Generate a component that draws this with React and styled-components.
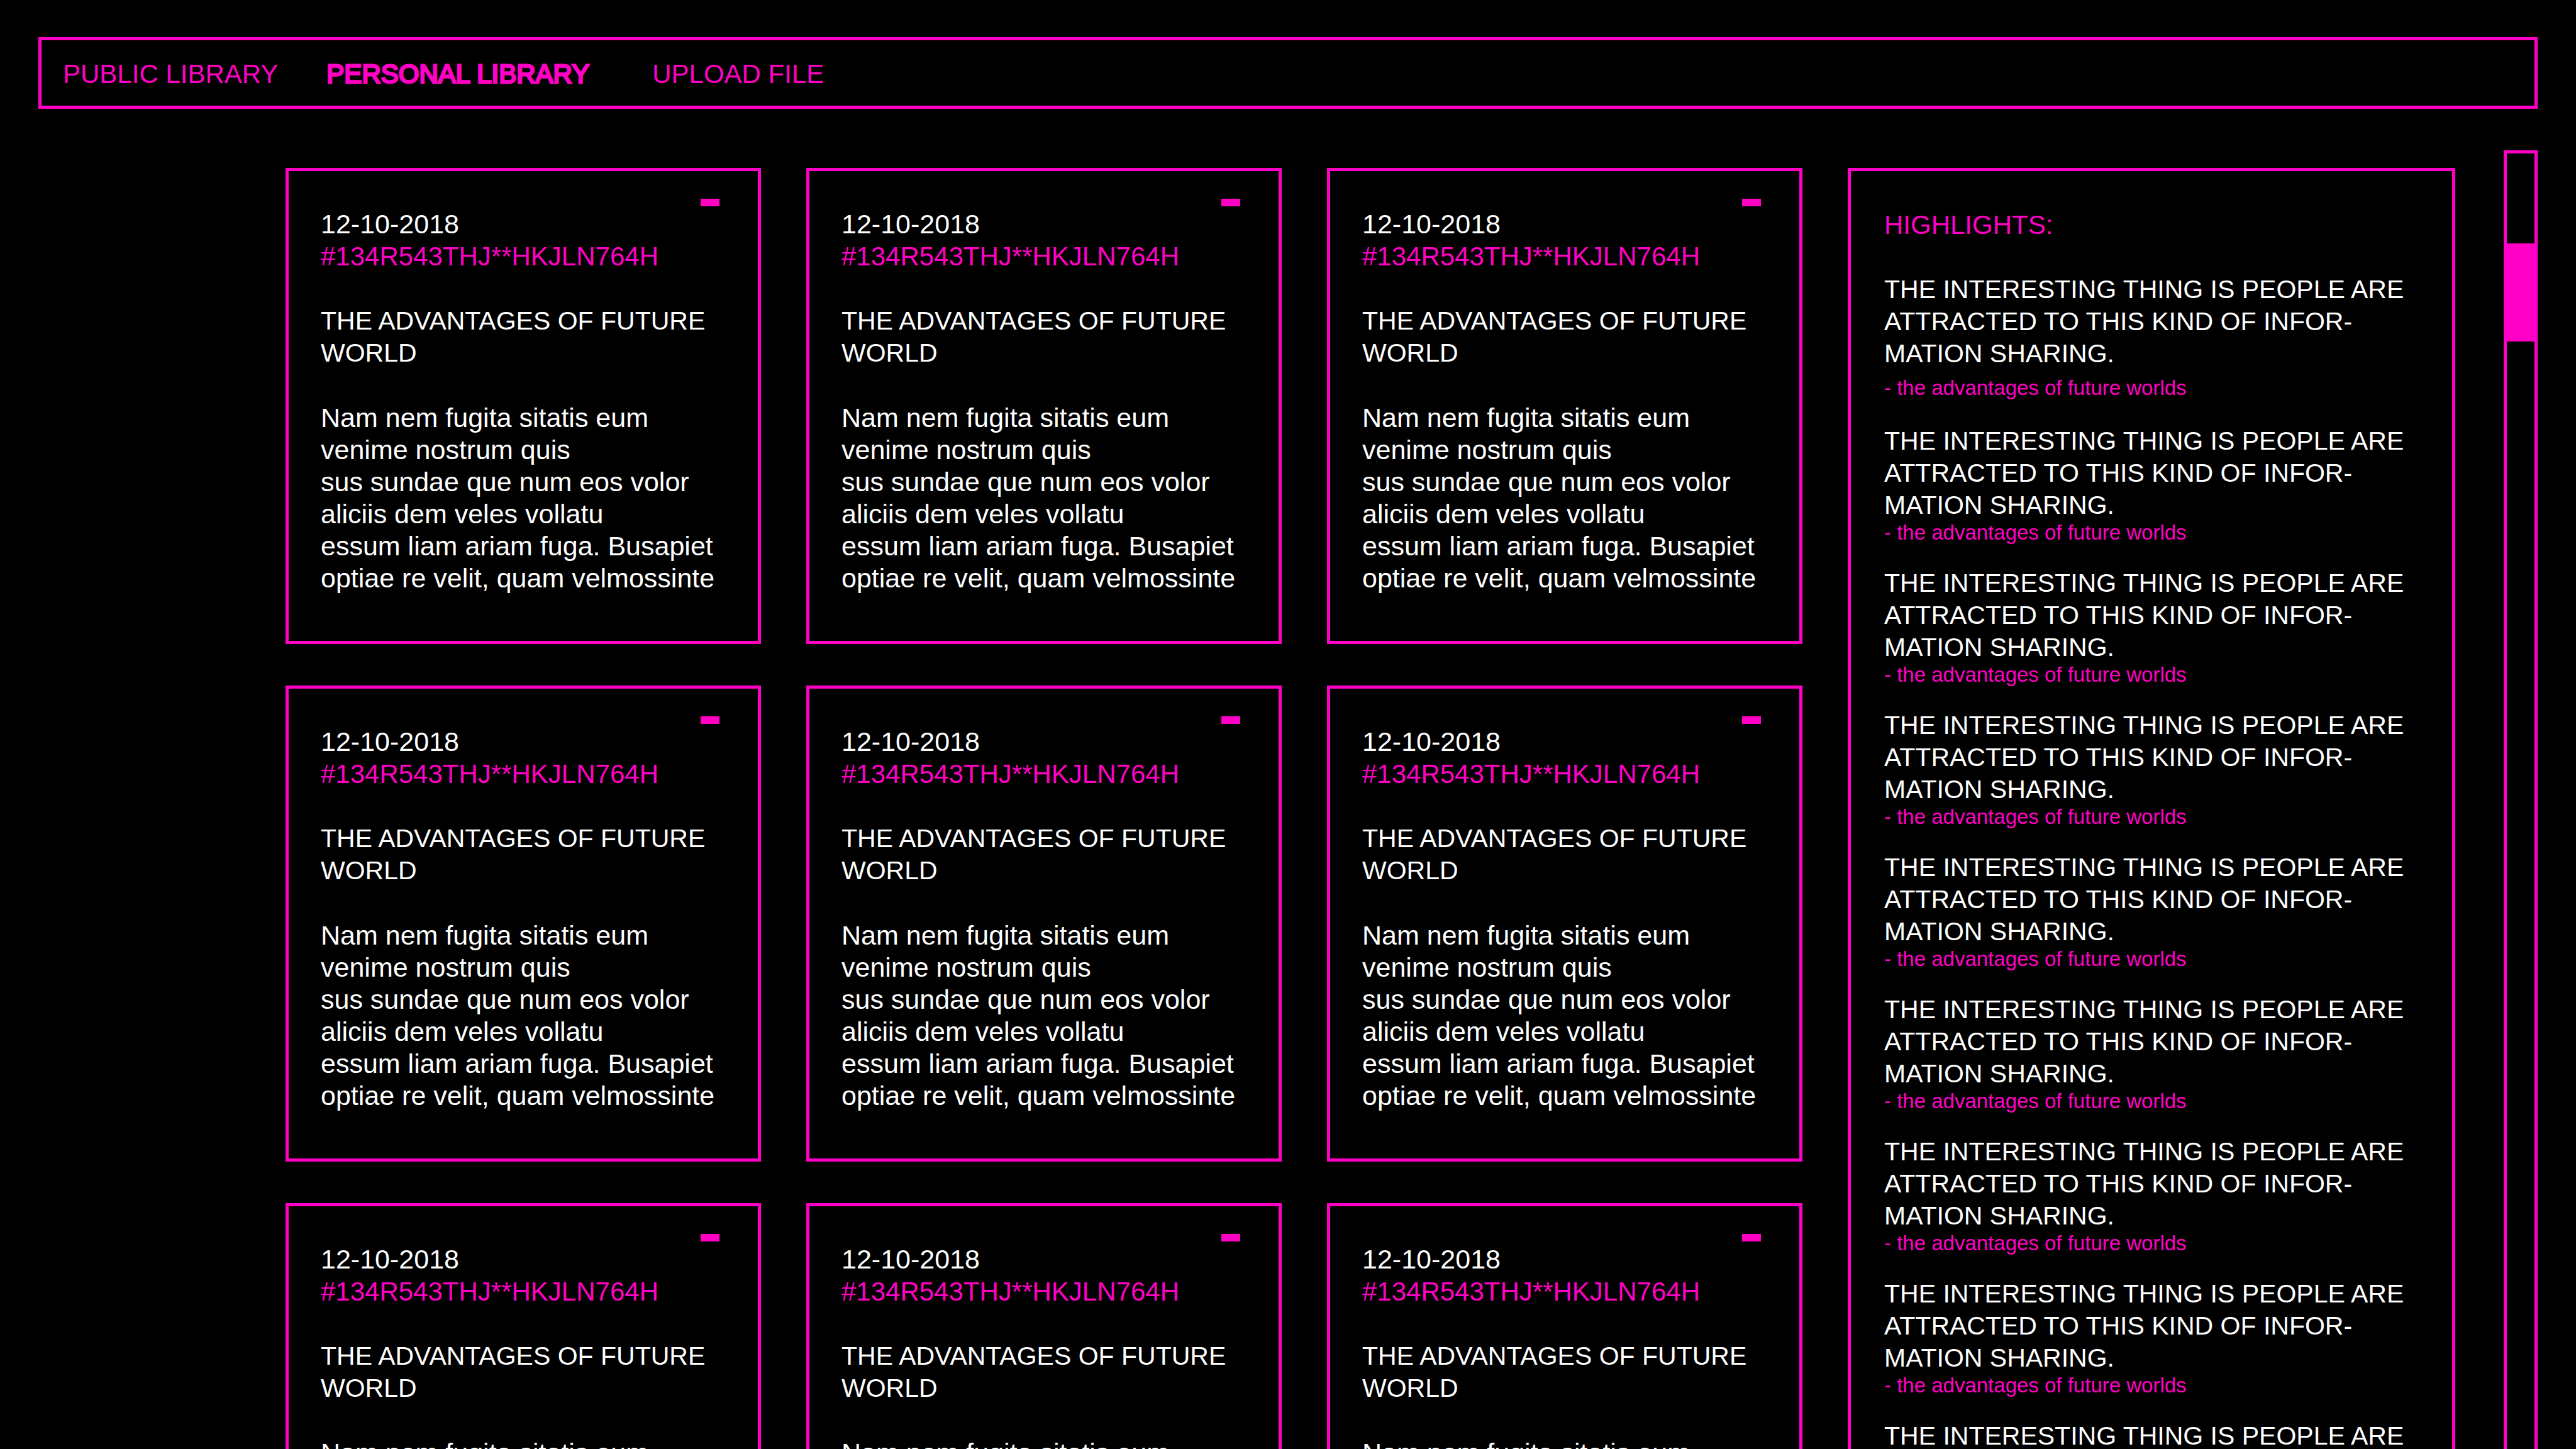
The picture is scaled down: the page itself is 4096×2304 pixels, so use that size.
import React from "react";
import styled, { createGlobalStyle } from "styled-components";

const PINK = "#ff00c4";

const GlobalStyle = createGlobalStyle`
  *, *::before, *::after { box-sizing: border-box; }
  body {
    margin: 0;
    background: #000;
    color: #fff;
    font-family: "Liberation Sans", Arial, sans-serif;
    font-size: 42px;
    line-height: 51px;
  }
  h2, p, ul { margin: 0; padding: 0; font: inherit; }
`;

const Page = styled.div`
  display: flex;
  flex-direction: column;
  height: 100vh;
  padding: 59px 61px 0;
  overflow: hidden;
`;

const NavBar = styled.nav`
  display: flex;
  flex: none;
  gap: 77px;
  padding: 28px 34px 25px;
  border: 5px solid ${PINK};
`;

const NavLink = styled.a`
  color: ${PINK};
  text-decoration: none;
  white-space: nowrap;
  padding-right: ${(p) => (p.$active ? "23px" : "0")};
  -webkit-text-stroke: ${(p) => (p.$active ? `3px ${PINK}` : "0")};
`;

const Main = styled.main`
  display: flex;
  flex: 1;
  min-height: 0;
  gap: 77px;
  margin-top: 66px;
  padding-left: 393px;
`;

const Columns = styled.div`
  display: grid;
  flex: 1;
  grid-template-columns: 2412fr 966fr;
  column-gap: 72px;
  align-items: start;
  padding-top: 28px;
`;

const CardGrid = styled.section`
  display: grid;
  grid-template-columns: repeat(3, 1fr);
  gap: 66px 72px;
`;

const Card = styled.article`
  display: flex;
  flex-direction: column;
  min-width: 0;
  padding: 44px 61px 74px 51px;
  border: 5px solid ${PINK};
`;

const RemoveButton = styled.button`
  align-self: flex-end;
  width: 30px;
  height: 12px;
  margin-bottom: 3px;
  padding: 0;
  border: 0;
  background: ${PINK};
  cursor: pointer;
`;

const DateLine = styled.p`
  font-size: 43px;
`;

const Tag = styled.p`
  color: ${PINK};
`;

const Title = styled.h2`
  margin-top: 52px;
  font-size: 41px;
  white-space: pre;
`;

const Excerpt = styled.p`
  margin-top: 52px;
  font-size: 43px;
  white-space: pre;
`;

const Highlights = styled.aside`
  padding: 60px 53px;
  border: 5px solid ${PINK};
`;

const HighlightsTitle = styled.h2`
  color: ${PINK};
`;

const HighlightList = styled.ul`
  display: flex;
  flex-direction: column;
  gap: 37px;
  padding-top: 52px;
  list-style: none;
`;

const Quote = styled.p`
  font-size: 41px;
  white-space: pre;
`;

const Source = styled.p`
  padding: ${(p) => (p.$lead ? "11px 0 4px" : "0")};
  color: ${PINK};
  font-size: 33px;
  line-height: 36px;
  white-space: pre;
`;

const ScrollTrack = styled.div`
  flex: none;
  width: 54px;
  padding-top: 143px;
  border: 5px solid ${PINK};
  border-bottom: 0;
`;

const ScrollThumb = styled.div`
  height: 156px;
  background: ${PINK};
`;

const NAV = ["PUBLIC LIBRARY", "PERSONAL LIBRARY", "UPLOAD FILE"];

const ENTRY = {
  date: "12-10-2018",
  tag: "#134R543THJ**HKJLN764H",
  title: "THE ADVANTAGES OF FUTURE\nWORLD",
  excerpt:
    "Nam nem fugita sitatis eum\nvenime nostrum quis\nsus sundae que num eos volor\naliciis dem veles vollatu\nessum liam ariam fuga. Busapiet\noptiae re velit, quam velmossinte",
};

const QUOTE =
  "THE INTERESTING THING IS PEOPLE ARE\nATTRACTED TO THIS KIND OF INFOR-\nMATION SHARING.";

const entries = Array.from({ length: 9 }, (_, id) => ({ id, ...ENTRY }));
const highlights = Array.from({ length: 9 }, (_, id) => ({ id, quote: QUOTE }));

export default function App() {
  return (
    <>
      <GlobalStyle />
      <Page>
        <NavBar>
          {NAV.map((label) => {
            const active = label === "PERSONAL LIBRARY";
            return (
              <NavLink
                key={label}
                href="#"
                $active={active}
                aria-current={active ? "page" : undefined}
              >
                {label}
              </NavLink>
            );
          })}
        </NavBar>
        <Main>
          <Columns>
            <CardGrid>
              {entries.map((e) => (
                <Card key={e.id}>
                  <RemoveButton aria-label="Remove" />
                  <DateLine>{e.date}</DateLine>
                  <Tag>{e.tag}</Tag>
                  <Title>{e.title}</Title>
                  <Excerpt>{e.excerpt}</Excerpt>
                </Card>
              ))}
            </CardGrid>
            <Highlights>
              <HighlightsTitle>HIGHLIGHTS:</HighlightsTitle>
              <HighlightList>
                {highlights.map((h) => (
                  <li key={h.id}>
                    <Quote>{h.quote}</Quote>
                    <Source $lead={h.id === 0}>
                      - the advantages of future worlds
                    </Source>
                  </li>
                ))}
              </HighlightList>
            </Highlights>
          </Columns>
          <ScrollTrack>
            <ScrollThumb />
          </ScrollTrack>
        </Main>
      </Page>
    </>
  );
}
